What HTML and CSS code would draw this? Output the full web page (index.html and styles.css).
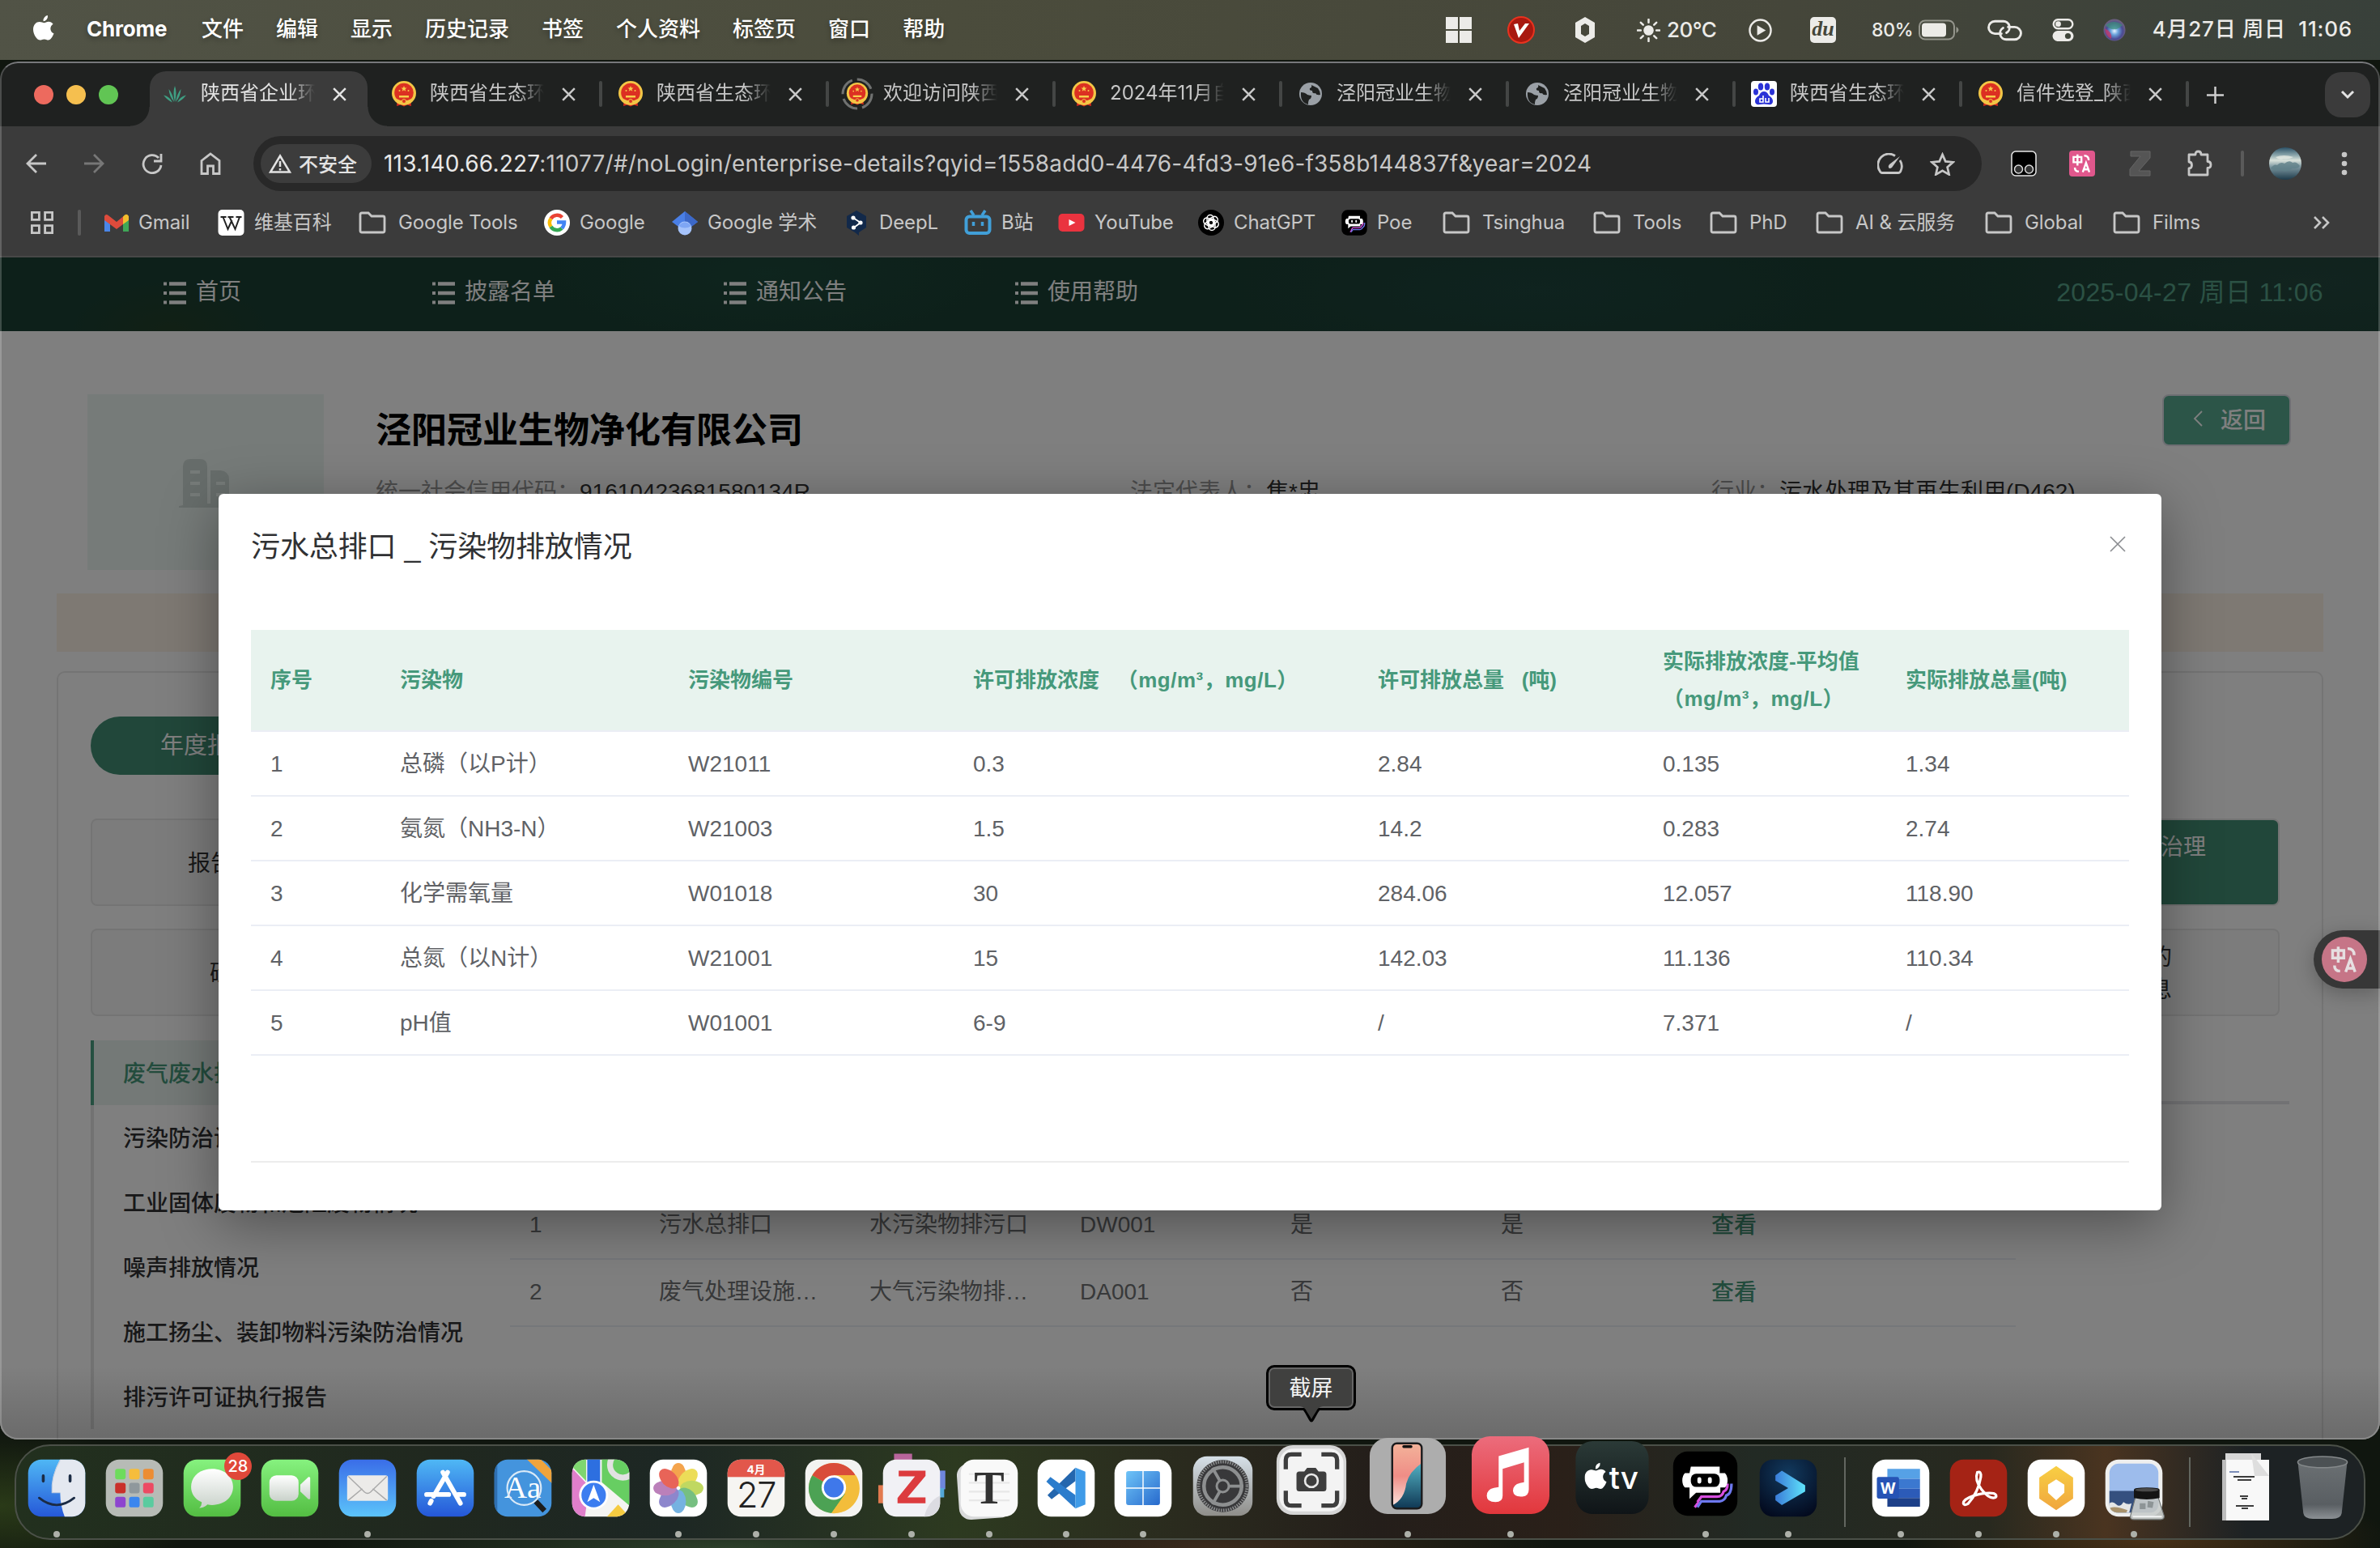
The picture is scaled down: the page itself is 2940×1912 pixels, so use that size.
FILE: index.html
```html
<!DOCTYPE html>
<html lang="zh-CN">
<head>
<meta charset="utf-8">
<title>陕西省企业环境信息</title>
<link rel="stylesheet" href="styles.css">
</head>
<body>
<svg class="sprite" aria-hidden="true">
  <defs>
    <linearGradient id="gBlue" x1="0" y1="0" x2="0" y2="1"><stop offset="0" stop-color="#4fb8f5"/><stop offset="1" stop-color="#2557d8"/></linearGradient>
    <linearGradient id="gGreen" x1="0" y1="0" x2="0" y2="1"><stop offset="0" stop-color="#86f27f"/><stop offset="1" stop-color="#53bd42"/></linearGradient>
    <linearGradient id="gMail" x1="0" y1="0" x2="0" y2="1"><stop offset="0" stop-color="#3a6de8"/><stop offset="1" stop-color="#5cc4fa"/></linearGradient>
    <linearGradient id="gRed" x1="0" y1="0" x2="0" y2="1"><stop offset="0" stop-color="#ec6c7c"/><stop offset="1" stop-color="#e2373c"/></linearGradient>
    <linearGradient id="gWhite" x1="0" y1="0" x2="0" y2="1"><stop offset="0" stop-color="#fff"/><stop offset="1" stop-color="#c9d2ca"/></linearGradient>
    <linearGradient id="gTv" x1="0" y1="0" x2="0" y2="1"><stop offset="0" stop-color="#2b3a37"/><stop offset="1" stop-color="#0f1417"/></linearGradient>
    <linearGradient id="gWin" x1="0" y1="0" x2="1" y2="1"><stop offset="0" stop-color="#6ec4f8"/><stop offset="1" stop-color="#2769cc"/></linearGradient>
    <linearGradient id="gTrash" x1="0" y1="0" x2="0" y2="1"><stop offset="0" stop-color="#6b7073"/><stop offset=".75" stop-color="#595e62"/><stop offset="1" stop-color="#8b9094"/></linearGradient>
    <linearGradient id="gSky" x1="0" y1="0" x2="0" y2="1"><stop offset="0" stop-color="#2a5066"/><stop offset=".25" stop-color="#8fa9ae"/><stop offset=".4" stop-color="#dbe3dc"/><stop offset=".6" stop-color="#7d97a0"/><stop offset="1" stop-color="#1d3a4a"/></linearGradient>
    <linearGradient id="gPhone" x1="0" y1="0" x2="0" y2="1"><stop offset="0" stop-color="#f3b39a"/><stop offset=".5" stop-color="#ef8d86"/><stop offset="1" stop-color="#fbe8e2"/></linearGradient>
    <linearGradient id="gPhone2" x1="0" y1="0" x2="0" y2="1"><stop offset="0" stop-color="#54b4c6"/><stop offset="1" stop-color="#0d3350"/></linearGradient>
    <linearGradient id="gGear" x1="0" y1="0" x2="0" y2="1"><stop offset="0" stop-color="#d6e0e8"/><stop offset="1" stop-color="#8f8e8a"/></linearGradient>
    <radialGradient id="gNavy" cx=".5" cy=".25" r=".8"><stop offset="0" stop-color="#123a5e"/><stop offset="1" stop-color="#030a1e"/></radialGradient>
    <linearGradient id="gCyan" x1="0" y1="0" x2="1" y2="0"><stop offset="0" stop-color="#3a7bd8"/><stop offset="1" stop-color="#5fe4fb"/></linearGradient>
    <linearGradient id="gYel" x1="0" y1="0" x2="0" y2="1"><stop offset="0" stop-color="#f8cf44"/><stop offset="1" stop-color="#f0a63e"/></linearGradient>
    <radialGradient id="gSiri" cx=".5" cy=".55" r=".5"><stop offset="0" stop-color="#e8f4ff"/><stop offset=".35" stop-color="#6aa3dc"/><stop offset=".75" stop-color="#4a4a94"/><stop offset="1" stop-color="#6b5f80"/></radialGradient>
    <clipPath id="sq"><rect x="1" y="1" width="98" height="98" rx="23"/></clipPath>
    <clipPath id="ph"><rect x="30" y="8" width="38" height="84" rx="6"/></clipPath>
  </defs>
  <symbol id="emblem" viewBox="0 0 32 32">
    <path d="M8 22h16l1 9-5-1.500-4 2-4-2-5 1.500z" fill="#d9281e"/>
    <circle cx="16" cy="15" r="15" fill="#f3c646"/>
    <circle cx="16" cy="14.500" r="11.800" fill="#dc3022"/>
    <path d="M16 6l1 2.500h2.500l-2 1.700.8 2.600-2.300-1.600-2.300 1.600.8-2.600-2-1.700H15zM10 18h12v2.500H10z" fill="#f7cf4b"/>
    <circle cx="10.500" cy="12" r="1" fill="#f7cf4b"/><circle cx="21.500" cy="12" r="1" fill="#f7cf4b"/>
    <path d="M7 22q9 5 18 0l-1 3.500q-8 4-16 0z" fill="#f3c646"/><circle cx="16" cy="25" r="2.500" fill="#dc3022" stroke="#f3c646"/>
  </symbol>
  <symbol id="globe" viewBox="0 0 32 32"><circle cx="16" cy="16" r="14" fill="#9aa0a6"/><path d="M4 14q5 0 8 3 3 1 5 1 0 4-3 5-1 2-1 6Q3 27 4 14zM17 5l8 4q3 4 3 8-5 1-6-2-4 1-4-3-4 0-3-3 3-1 2-4z" fill="#1f2120"/></symbol>
  <symbol id="x" viewBox="0 0 20 20"><path d="M3 3l14 14M17 3L3 17" stroke="currentColor" stroke-width="2.400" fill="none"/></symbol>
  <symbol id="folder" viewBox="0 0 34 28"><path d="M2 24V4q0-2 2-2h8l4 4h14q2 0 2 2v16q0 2-2 2H4q-2 0-2-2z" fill="none" stroke="#c7c7c7" stroke-width="2.800"/></symbol>
  <symbol id="list" viewBox="0 0 28 28"><path d="M7 2.500h21M7 14h21M7 25.500h21" stroke="#fff" stroke-width="4.500"/><path d="M0 2.500h4M0 14h4M0 25.500h4" stroke="#fff" stroke-width="4"/></symbol>
  <symbol id="trans" viewBox="0 0 32 32"><path d="M3 6h12v8H3zM9 2v17M19 4q7 0 7 7M5 22q0 6 6 6" fill="none" stroke="currentColor" stroke-width="3"/><path d="M17 29l5-14 5 14M19 25h6.500" fill="none" stroke="currentColor" stroke-width="3"/></symbol>
  <symbol id="poe" viewBox="0 0 100 100"><rect x="1" y="1" width="98" height="98" rx="22" fill="#000"/><path d="M38 78l6-8h24q8 0 10-8 6-2 6-12M34 86l6-8" fill="none" stroke="#d84fe0" stroke-width="4"/><path d="M38 86l6-9h28q8-1 10-9 8-2 8-18" fill="none" stroke="#6d78ee" stroke-width="4"/><path d="M28 24h44v10h8q4 4 4 11t-4 11h-7v8H36L26 73V56h-7q-4-4-4-11t4-11h7z" fill="#fff"/><rect x="28" y="35" width="44" height="20" rx="8" fill="#000"/><rect x="38" y="40" width="6" height="10" rx="3" fill="#fff"/><rect x="54" y="40" width="6" height="10" rx="3" fill="#fff"/></symbol>
  <symbol id="apple" viewBox="0 0 26 32"><path d="M18 0q.4 3-1.500 5.200T12.600 7.300q-.5-2.800 1.400-5T18 0zM13.500 9.200c1.500 0 3-1.500 5.600-1.500 2 0 4.200 1.100 5.500 3-4.800 2.900-4 9.700.9 11.600-1 3-3.800 8.300-6.900 8.300-1.900 0-2.700-1.200-5-1.200s-3.200 1.200-5 1.200C4.600 30.600 0 23.500 0 17.500 0 11.300 4 8 7.700 8c2.500 0 4.300 1.200 5.800 1.200z" fill="#fff"/></symbol>
</svg>

<header class="menubar">
  <nav class="menus">
    <svg class="apple"><use href="#apple"/></svg>
    <b>Chrome</b><span>文件</span><span>编辑</span><span>显示</span><span>历史记录</span><span>书签</span><span>个人资料</span><span>标签页</span><span>窗口</span><span>帮助</span>
  </nav>
  <div class="status">
    <svg viewBox="0 0 32 32" width="32" height="32"><path d="M0 0h15v15H0zM17 0h15v15H17zM0 17h15v15H0zM17 17h15v15H17z" fill="#ecebe8"/></svg>
    <svg viewBox="0 0 34 34" width="34" height="34"><circle cx="17" cy="17" r="16" fill="#a81810" stroke="#e8331f" stroke-width="2"/><path d="M8 10l5-1 2 9 7-9h5L14 27z" fill="#fff"/></svg>
    <svg viewBox="0 0 26 32" width="26" height="32"><path d="M13 0l12 7v18l-12 7L1 25V7zM13 8l-5 3v10l5 3 5-3V11z" fill="#ecebe8" fill-rule="evenodd"/></svg>
    <svg viewBox="0 0 30 30" width="29" height="29"><circle cx="15" cy="15" r="6.500" fill="#ecebe8"/><path d="M15 1v4M15 25v4M1 15h4M25 15h4M5 5l3 3M22 22l3 3M25 5l-3 3M5 25l3-3" stroke="#ecebe8" stroke-width="2.600" stroke-linecap="round"/></svg>
    <span class="temp">20°C</span>
    <svg viewBox="0 0 30 30" width="29" height="29"><circle cx="15" cy="15" r="13.500" fill="none" stroke="#ecebe8" stroke-width="2.500"/><path d="M11 8.500l11 6.500-11 6.500z" fill="#ecebe8"/></svg>
    <span class="du">du</span>
    <span class="pct">80%</span>
    <svg viewBox="0 0 50 26" width="50" height="26"><rect x="1" y="1.500" width="43" height="23" rx="7" fill="none" stroke="#94958c" stroke-width="2"/><rect x="4" y="4.500" width="30" height="17" rx="4" fill="#ecebe8"/><path d="M46.500 9q3 1.500 3 4t-3 4z" fill="#94958c"/></svg>
    <svg viewBox="0 0 42 26" width="43" height="27"><path d="M17 17H9a7.500 7.500 0 0 1 0-15h10a7.500 7.500 0 0 1 4 14M25 9h8a7.500 7.500 0 0 1 0 15H23a7.500 7.500 0 0 1-4-14" fill="none" stroke="#ecebe8" stroke-width="2.800" stroke-linecap="round"/></svg>
    <svg viewBox="0 0 26 28" width="27" height="28"><rect x="1.200" y="1.200" width="23.600" height="11" rx="5.500" fill="none" stroke="#ecebe8" stroke-width="2.400"/><circle cx="7" cy="6.700" r="3.400" fill="#ecebe8"/><rect x="0" y="15" width="26" height="13" rx="6.500" fill="#ecebe8"/><circle cx="19" cy="21.500" r="3.600" fill="#3f4539"/></svg>
    <svg viewBox="0 0 28 28" width="28" height="28"><circle cx="14" cy="14" r="13.500" fill="url(#gSiri)"/><path d="M3 8q10-8 21 0-6 6-10 5Q8 14 3 8z" fill="#3f8f77" opacity=".7"/><path d="M2 12q1 10 8 13 2-8-8-13z" fill="#c0386a" opacity=".8"/></svg>
    <span class="clock">4月27日 周日&nbsp; 11:06</span>
  </div>
</header>

<main class="window">
  <div class="tabstrip">
    <div class="lights"><i class="red"></i><i class="yellow"></i><i class="green"></i></div>
    <div class="tabs">
      <div class="tab active"><svg class="fav" viewBox="0 0 32 32"><path d="M16 26Q13 14 16 6q3 8 0 20zM15 26Q9 19 8.500 10q5 6 6.500 16zM17 26q6-7 6.500-16-5 6-6.500 16zM13 26.500Q7 24 2 17.500q8 2 11 9zM19 26.500q6-2.500 11-9-8 2-11 9z" fill="#3f9f83"/></svg><span>陕西省企业环</span><svg class="close"><use href="#x"/></svg></div>
      <div class="tab"><svg class="fav"><use href="#emblem"/></svg><span>陕西省生态环</span><svg class="close"><use href="#x"/></svg></div>
      <div class="tab"><svg class="fav"><use href="#emblem"/></svg><span>陕西省生态环</span><svg class="close"><use href="#x"/></svg></div>
      <div class="tab"><svg class="fav big" viewBox="0 0 40 40"><circle cx="20" cy="20" r="18" fill="none" stroke="#6f7170" stroke-width="3" stroke-dasharray="22 6"/><use href="#emblem" x="6" y="6" width="28" height="28"/></svg><span>欢迎访问陕西</span><svg class="close"><use href="#x"/></svg></div>
      <div class="tab"><svg class="fav"><use href="#emblem"/></svg><span>2024年11月自</span><svg class="close"><use href="#x"/></svg></div>
      <div class="tab"><svg class="fav"><use href="#globe"/></svg><span>泾阳冠业生物</span><svg class="close"><use href="#x"/></svg></div>
      <div class="tab"><svg class="fav"><use href="#globe"/></svg><span>泾阳冠业生物</span><svg class="close"><use href="#x"/></svg></div>
      <div class="tab"><svg class="fav" viewBox="0 0 32 32"><rect width="32" height="32" rx="4" fill="#fff"/><g fill="#2a32d6"><ellipse cx="12" cy="7" rx="3.200" ry="4.500"/><ellipse cx="20" cy="7" rx="3.200" ry="4.500"/><ellipse cx="6" cy="13.500" rx="3" ry="4"/><ellipse cx="26" cy="13.500" rx="3" ry="4"/><path d="M16 13q4 0 6 5 5 3 5 7 0 5-6 4-5-1-10 0-6 1-6-4 0-4 5-7 2-5 6-5z"/></g><path d="M11 22h4v4h-4zM15 18v8M18 21v5h4v-5" fill="none" stroke="#fff" stroke-width="1.600"/></svg><span>陕西省生态环</span><svg class="close"><use href="#x"/></svg></div>
      <div class="tab"><svg class="fav"><use href="#emblem"/></svg><span>信件选登_陕西</span><svg class="close"><use href="#x"/></svg></div>
    </div>
    <svg class="plus" viewBox="0 0 24 24"><path d="M12 1v22M1 12h22" stroke="#cfcfcf" stroke-width="2.600"/></svg>
    <div class="tabmenu"><svg viewBox="0 0 18 12" width="18" height="12"><path d="M2 2l7 7 7-7" fill="none" stroke="#e3e3e3" stroke-width="3"/></svg></div>
  </div>

  <div class="toolbar">
    <svg viewBox="0 0 26 26" width="26" height="26"><path d="M25 13H2M13 2L2 13l11 11" fill="none" stroke="#c7c7c7" stroke-width="2.800"/></svg>
    <svg viewBox="0 0 26 26" width="26" height="26"><path d="M1 13h23M13 2l11 11-11 11" fill="none" stroke="#777" stroke-width="2.800"/></svg>
    <svg viewBox="0 0 26 26" width="26" height="26"><path d="M21 6A11 11 0 1 0 24 15" fill="none" stroke="#c7c7c7" stroke-width="2.800"/><path d="M24 1v9h-9" fill="none" stroke="#c7c7c7" stroke-width="2.800"/></svg>
    <svg viewBox="0 0 26 28" width="26" height="28"><path d="M2 10.500L13 2l11 8.500V26.500h-7.500V17h-7v9.500H2z" fill="none" stroke="#c7c7c7" stroke-width="2.800"/></svg>
    <div class="omnibox">
      <div class="chip"><svg viewBox="0 0 28 24" width="28" height="24"><path d="M14 2.500L26 22.500H2z" fill="none" stroke="#e3e3e3" stroke-width="2.500"/><path d="M14 9v7M14 18v2.500" stroke="#e3e3e3" stroke-width="2.500"/></svg>不安全</div>
      <span class="url"><b>113.140.66.227</b>:11077/#/noLogin/enterprise-details?qyid=1558add0-4476-4fd3-91e6-f358b144837f&amp;year=2024</span>
      <svg viewBox="0 0 32 26" width="32" height="26"><path d="M22 3.500A13.500 13.500 0 0 0 3 22q1 2.500 3 2.500h20q2 0 3-2.500a13.500 13.500 0 0 0-1-13" fill="none" stroke="#c7c7c7" stroke-width="2.800"/><path d="M28 4L18 18q-3 2-4 0t1-4z" fill="#c7c7c7"/></svg>
      <svg viewBox="0 0 32 30" width="31" height="29"><path d="M16 3l3.900 8.800 9.600.9-7.200 6.400 2.100 9.400-8.400-4.900-8.400 4.900 2.100-9.400-7.200-6.400 9.600-.9z" fill="none" stroke="#c7c7c7" stroke-width="2.800"/></svg>
    </div>
    <div class="exts">
      <svg viewBox="0 0 32 32" width="32" height="32"><rect x="1" y="1" width="30" height="30" rx="5" fill="#000" stroke="#e8e8e8" stroke-width="1.500"/><circle cx="9.500" cy="23" r="5" fill="#333" stroke="#ddd" stroke-width="1.500"/><circle cx="22.500" cy="23" r="5" fill="#333" stroke="#ddd" stroke-width="1.500"/></svg>
      <svg class="pinkext" viewBox="0 0 32 32" width="32" height="32"><rect width="32" height="32" rx="4" fill="#e0578c"/><use href="#trans" x="3" y="3" width="26" height="26"/></svg>
      <svg viewBox="0 0 28 32" width="28" height="32"><path d="M2 1h24v8L12 25h14v6H1v-8L14 7H2z" fill="#555" stroke="#666"/></svg>
      <svg viewBox="0 0 34 34" width="34" height="34"><path d="M4 6h8q0-4 3.500-4T19 6h8v8.500q4 0 4 4t-4 4V31H4v-8q3.500 0 3.500-4T4 15z" fill="none" stroke="#c7c7c7" stroke-width="2.800" stroke-linejoin="round"/></svg>
      <i class="vsep"></i>
      <svg viewBox="0 0 40 40" width="40" height="40"><circle cx="20" cy="20" r="20" fill="url(#gSky)"/><path d="M2 26q4-6 8-4 4-5 9-2 6-5 10-1 5-2 9 4-3 4-9 3-8 6-15 2-7 2-12-2z" fill="#5f7f88" opacity=".8"/><path d="M8 12q10-4 22 0-6 3-12 2-6 2-10-2z" fill="#eef0e8" opacity=".7"/></svg>
      <svg viewBox="0 0 8 30" width="8" height="30"><g fill="#c7c7c7"><circle cx="4" cy="4" r="3.300"/><circle cx="4" cy="15" r="3.300"/><circle cx="4" cy="26" r="3.300"/></g></svg>
    </div>
  </div>

  <div class="bookmarks">
    <span class="bm"><svg viewBox="0 0 28 28" width="28" height="28"><path d="M1.400 1.400h9v9h-9zM17.600 1.400h9v9h-9zM1.400 17.600h9v9h-9zM17.600 17.600h9v9h-9z" fill="none" stroke="#c7c7c7" stroke-width="2.800"/></svg></span>
    <i class="vsep"></i>
    <span class="bm"><svg viewBox="0 0 30 22" width="30" height="22"><path d="M0 3v19h7V9z" fill="#4a86e8"/><path d="M30 3v19h-7V9z" fill="#3fa757"/><path d="M30 3v5l-7 5V3.500q4-5 7-.5z" fill="#f2bc2d"/><path d="M0 3v5l15 11 8-6V3.500L15 10 6 3Q2-1 0 3z" fill="#dd4b3c"/></svg>Gmail</span>
    <span class="bm"><svg viewBox="0 0 32 32" width="33" height="32"><rect width="32" height="32" rx="5" fill="#fff"/><path d="M3 9h7M12 9h7M22 9h7M6 9l6 15 5-11M14 9l7 15 5.500-15" fill="none" stroke="#222" stroke-width="2"/></svg>维基百科</span>
    <span class="bm f"><svg width="34" height="28"><use href="#folder"/></svg>Google Tools</span>
    <span class="bm"><svg viewBox="0 0 32 32" width="32" height="32"><circle cx="16" cy="16" r="16" fill="#fff"/><g fill="none" stroke-width="4.500"><path d="M22.500 9.500A9 9 0 0 0 8.500 11" stroke="#ea4335"/><path d="M8.500 11a9 9 0 0 0 0 10" stroke="#fbbc05"/><path d="M8.500 21a9 9 0 0 0 13.500 2" stroke="#34a853"/><path d="M22 23q3-3 3-7.500h-9" stroke="#4285f4"/></g></svg>Google</span>
    <span class="bm"><svg viewBox="0 0 32 32" width="32" height="32"><path d="M16 2L0 15l8 6h16l8-6z" fill="#4a7fe6"/><path d="M16 2l16 13-8 6-8-6z" fill="#3c68c8"/><circle cx="16" cy="23" r="8.500" fill="#a5c3fb"/><path d="M8 20q8-9 16 0-8 5-16 0z" fill="#7ea6f4"/></svg>Google 学术</span>
    <span class="bm deepl"><svg viewBox="0 0 26 32" width="26" height="32"><path d="M13 1l12 7v14l-9 6v4l-5-4L1 22V8z" fill="#12294a"/><path d="M9 10l9 6-8 6" fill="none" stroke="#fff" stroke-width="1.800"/><g fill="#fff"><circle cx="9" cy="10" r="2.600"/><circle cx="18" cy="16" r="2.600"/><circle cx="9.500" cy="22" r="2.600"/></g></svg>DeepL</span>
    <span class="bm"><svg viewBox="0 0 34 32" width="34" height="32"><rect x="2.500" y="8.500" width="29" height="20.500" rx="4" fill="none" stroke="#419fd8" stroke-width="4"/><path d="M8 1l4 6M26 1l-4 6M11.500 15v5M22.500 15v5" stroke="#419fd8" stroke-width="3.500"/></svg>B站</span>
    <span class="bm"><svg viewBox="0 0 32 22" width="33" height="22"><rect width="32" height="22" rx="5" fill="#ea333f"/><path d="M13 7l8 4-8 4z" fill="#fff"/></svg>YouTube</span>
    <span class="bm"><svg viewBox="0 0 32 32" width="32" height="32"><circle cx="16" cy="16" r="16" fill="#000"/><g fill="none" stroke="#fff" stroke-width="1.500"><rect x="11" y="6.500" width="8" height="13" rx="4"/><rect x="11" y="6.500" width="8" height="13" rx="4" transform="rotate(60 16 16)"/><rect x="11" y="6.500" width="8" height="13" rx="4" transform="rotate(120 16 16)"/><rect x="11" y="6.500" width="8" height="13" rx="4" transform="rotate(180 16 16)"/><rect x="11" y="6.500" width="8" height="13" rx="4" transform="rotate(240 16 16)"/><rect x="11" y="6.500" width="8" height="13" rx="4" transform="rotate(300 16 16)"/></g></svg>ChatGPT</span>
    <span class="bm"><svg width="32" height="32"><use href="#poe"/></svg>Poe</span>
    <span class="bm f"><svg width="34" height="28"><use href="#folder"/></svg>Tsinghua</span>
    <span class="bm f"><svg width="34" height="28"><use href="#folder"/></svg>Tools</span>
    <span class="bm f"><svg width="34" height="28"><use href="#folder"/></svg>PhD</span>
    <span class="bm f"><svg width="34" height="28"><use href="#folder"/></svg>AI &amp; 云服务</span>
    <span class="bm f"><svg width="34" height="28"><use href="#folder"/></svg>Global</span>
    <span class="bm f"><svg width="34" height="28"><use href="#folder"/></svg>Films</span>
    <span class="bm"><svg viewBox="0 0 22 18" width="22" height="18"><path d="M2 2l7 7-7 7M12 2l7 7-7 7" fill="none" stroke="#c7c7c7" stroke-width="2.600"/></svg></span>
  </div>

  <section class="page">
    <nav class="sitenav">
      <a><svg><use href="#list"/></svg>首页</a>
      <a><svg><use href="#list"/></svg>披露名单</a>
      <a><svg><use href="#list"/></svg>通知公告</a>
      <a><svg><use href="#list"/></svg>使用帮助</a>
      <time>2025-04-27 周日 11:06</time>
    </nav>

    <div class="company">
      <div class="photo"><svg viewBox="0 0 64 60" width="64" height="60"><path d="M5 57V9q0-9 9-9h12q9 0 9 9v46h4V14h12q11 1 11 11v32h2v3H0v-2zM14 14v4h12v-4zM14 28v4h12v-4zM14 42v4h12v-4zM46 28v4h11v-4zM46 42v4h11v-4z" fill="#cfdbd6" fill-rule="evenodd"/></svg></div>
      <div class="facts">
        <h1>泾阳冠业生物净化有限公司</h1>
        <div class="row"><p><label>统一社会信用代码：</label>91610423681580134R</p><p><label>法定代表人：</label>焦*忠</p><p><label>行业：</label>污水处理及其再生利用(D462)</p></div>
      </div>
      <button class="back"><svg viewBox="0 0 12 20" width="12" height="20"><path d="M11 1L2 10l9 9" fill="none" stroke="#fff" stroke-width="1.800"/></svg>返回</button>
    </div>

    <div class="notice"></div>

    <div class="card">
      <div class="pill">年度报</div>
      <div class="tiles">
        <div class="tile t1">报告</div><div class="tile t2 on">治理</div>
        <div class="tile t3">碳</div><div class="tile t4">的<br>息</div>
      </div>
      <div class="detail">
        <ul class="side">
          <li class="on">废气废水排</li><li>污染防治设</li><li>工业固体废物和危险废物情况</li><li>噪声排放情况</li><li>施工扬尘、装卸物料污染防治情况</li><li>排污许可证执行报告</li>
        </ul>
        <div class="outlets">
          <div class="rule"></div>
          <div class="orow"><span>1</span><span>污水总排口</span><span>水污染物排污口</span><span>DW001</span><span>是</span><span>是</span><a>查看</a></div>
          <div class="orow"><span>2</span><span>废气处理设施…</span><span>大气污染物排…</span><span>DA001</span><span>否</span><span>否</span><a>查看</a></div>
        </div>
      </div>
    </div>

    <div class="mask">
      <div class="dialog">
        <header><h2>污水总排口 _ 污染物排放情况</h2><svg class="dx" viewBox="0 0 20 20"><path d="M1 1l18 18M19 1L1 19" stroke="#8b8d91" stroke-width="1.700"/></svg></header>
        <table>
          <colgroup><col class="c1"><col class="c2"><col class="c3"><col class="c4"><col class="c5"><col class="c6"><col class="c7"></colgroup>
          <thead><tr><th>序号</th><th>污染物</th><th>污染物编号</th><th>许可排放浓度&nbsp;&nbsp;&nbsp;<span class="unit">（mg/m³，mg/L）</span></th><th>许可排放总量&nbsp;&nbsp;&nbsp;(吨)</th><th>实际排放浓度-平均值<br><span class="unit">（mg/m³，mg/L）</span></th><th>实际排放总量(吨)</th></tr></thead>
          <tbody>
            <tr><td>1</td><td>总磷（以P计）</td><td>W21011</td><td>0.3</td><td>2.84</td><td>0.135</td><td>1.34</td></tr>
            <tr><td>2</td><td>氨氮（NH3-N）</td><td>W21003</td><td>1.5</td><td>14.2</td><td>0.283</td><td>2.74</td></tr>
            <tr><td>3</td><td>化学需氧量</td><td>W01018</td><td>30</td><td>284.06</td><td>12.057</td><td>118.90</td></tr>
            <tr><td>4</td><td>总氮（以N计）</td><td>W21001</td><td>15</td><td>142.03</td><td>11.136</td><td>110.34</td></tr>
            <tr><td>5</td><td>pH值</td><td>W01001</td><td>6-9</td><td>/</td><td>7.371</td><td>/</td></tr>
          </tbody>
        </table>
        <div class="endline"></div>
      </div>
    </div>
    <div class="translate"><svg viewBox="0 0 56 56" width="56" height="56"><circle cx="28" cy="28" r="28" fill="#c67587"/><use href="#trans" x="10" y="10" width="37" height="37"/></svg></div>
    <div class="shade"></div>
    <div class="tip">截屏<svg viewBox="0 0 34 20" width="34" height="20"><path d="M0 0q6 0 9 6l5 9q3 5 6 0l5-9q3-6 9-6z" fill="#000"/><path d="M3-2q6 1 8 6l5 8q1 3 2 0l5-8q2-5 8-6z" fill="#40403f"/></svg></div>
  </section>
</main>

<footer class="dock">
  <div class="app run"><svg viewBox="0 0 100 100"><g clip-path="url(#sq)"><rect width="100" height="100" fill="url(#gBlue)"/><path d="M56 0Q40 30 42 58h14q0 22 8 42h40V0z" fill="#e4e8f0"/></g><path d="M27 29v9M73 29v9" stroke="#1b2b44" stroke-width="5" stroke-linecap="round"/><path d="M56 2Q40 30 42 58h14" fill="none" stroke="#c3cede" stroke-width="1.500"/><path d="M20 67q30 24 60 0" fill="none" stroke="#1b2b44" stroke-width="4" stroke-linecap="round"/></svg></div>
  <div class="app"><svg viewBox="0 0 100 100"><rect x="1" y="1" width="98" height="98" rx="23" fill="#b7bbb6"/><g><rect x="17" y="17" width="18" height="18" rx="4" fill="#6edc5c"/><rect x="41" y="17" width="18" height="18" rx="4" fill="#f5bd3c"/><rect x="65" y="17" width="18" height="18" rx="4" fill="#ec8d33"/><rect x="17" y="41" width="18" height="18" rx="4" fill="#c9302a"/><rect x="41" y="41" width="18" height="18" rx="4" fill="#8f989c"/><rect x="65" y="41" width="18" height="18" rx="4" fill="#ec4a63"/><rect x="17" y="65" width="18" height="18" rx="4" fill="#8d45cf"/><rect x="41" y="65" width="18" height="18" rx="4" fill="#3a86ee"/><rect x="65" y="65" width="18" height="18" rx="4" fill="#5acb9f"/></g></svg></div>
  <div class="app"><svg viewBox="0 0 100 100"><rect x="1" y="1" width="98" height="98" rx="23" fill="url(#gGreen)"/><path d="M50 17c22 0 36 14 36 31S72 79 50 79q-4 0-8-1-6 6-14 6 5-5 4-10C20 69 14 59 14 48c0-17 14-31 36-31z" fill="url(#gWhite)"/></svg><em>28</em></div>
  <div class="app"><svg viewBox="0 0 100 100"><rect x="1" y="1" width="98" height="98" rx="23" fill="url(#gGreen)"/><rect x="15" y="28" width="50" height="44" rx="12" fill="url(#gWhite)"/><path d="M68 44l14-13q3-1 3 2v34q0 3-3 2L68 56z" fill="url(#gWhite)"/></svg></div>
  <div class="app run"><svg viewBox="0 0 100 100"><rect x="1" y="1" width="98" height="98" rx="23" fill="url(#gMail)"/><rect x="15" y="28" width="70" height="44" rx="4" fill="#ecebe9"/><path d="M17 30l28 27q5 4 10 0l28-27M17 71l24-20M83 71L59 51" fill="none" stroke="#a9a9a9" stroke-width="2"/></svg></div>
  <div class="app"><svg viewBox="0 0 100 100"><rect x="1" y="1" width="98" height="98" rx="23" fill="url(#gBlue)"/><g stroke="#fff" stroke-width="8" stroke-linecap="round"><path d="M54 23L30 64M46 23l30 53M18 61h38M72 61h10M26 72l-2 4"/></g></svg></div>
  <div class="app"><svg viewBox="0 0 100 100"><g clip-path="url(#sq)"><rect width="100" height="100" fill="#4494dd"/><path d="M0 10h6v90H0z" fill="#2f6fb0"/><path d="M56 0h24l24 24v22z" fill="#f0a43c"/></g><text x="18" y="67" font-family="Liberation Serif,serif" font-size="54" fill="#fff">Aa</text><circle cx="52" cy="50" r="29" fill="none" stroke="#d9e9f7" stroke-width="3"/><path d="M72 73l15 16" stroke="#1c1c1c" stroke-width="9"/></svg></div>
  <div class="app"><svg viewBox="0 0 100 100"><g clip-path="url(#sq)"><rect width="100" height="100" fill="#f4f4f2"/><path d="M0 15l30 32-8 60H0z" fill="#e07fcb"/><path d="M0 0h25v38L0 12z" fill="#7ed66f"/><path d="M52 0h52v84L52 40z" fill="#67ce62"/><path d="M60 100l20-22 20 22z" fill="#f5cb41"/><path d="M27 0h22v60H27z" fill="#2d6fe0"/><circle cx="88" cy="10" r="22" fill="none" stroke="#e2e2e2" stroke-width="10"/></g><circle cx="38" cy="62" r="25" fill="#fff"/><circle cx="38" cy="62" r="21" fill="#3c7df0"/><path d="M38 44l11 30-11-7-11 7z" fill="#fff"/></svg></div>
  <div class="app run"><svg viewBox="0 0 100 100"><rect x="1" y="1" width="98" height="98" rx="23" fill="#fff"/><g opacity=".85"><ellipse cx="50" cy="27" rx="13" ry="20" fill="#f3952e"/><ellipse cx="50" cy="27" rx="13" ry="20" fill="#e9d83c" transform="rotate(45 50 50)"/><ellipse cx="50" cy="27" rx="13" ry="20" fill="#b6d246" transform="rotate(90 50 50)"/><ellipse cx="50" cy="27" rx="13" ry="20" fill="#5fb56c" transform="rotate(135 50 50)"/><ellipse cx="50" cy="27" rx="13" ry="20" fill="#5ea5dc" transform="rotate(180 50 50)"/><ellipse cx="50" cy="27" rx="13" ry="20" fill="#7a72c4" transform="rotate(225 50 50)"/><ellipse cx="50" cy="27" rx="13" ry="20" fill="#b06aae" transform="rotate(270 50 50)"/><ellipse cx="50" cy="27" rx="13" ry="20" fill="#e5493c" transform="rotate(315 50 50)"/></g></svg></div>
  <div class="app run"><svg viewBox="0 0 100 100"><g clip-path="url(#sq)"><rect width="100" height="100" fill="#f6f5f2"/><rect width="100" height="31" fill="#e2574b"/></g><text x="50" y="25" text-anchor="middle" font-family="Inter,Noto Sans CJK SC,sans-serif" font-weight="700" font-size="19" fill="#fff">4月</text><text x="50" y="84" text-anchor="middle" font-family="Inter,sans-serif" font-weight="300" font-size="60" letter-spacing="-2" fill="#222">27</text></svg></div>
  <div class="app run"><svg viewBox="0 0 100 100"><rect x="1" y="1" width="98" height="98" rx="23" fill="#f3f3f1"/><circle cx="50" cy="50" r="43" fill="#f3bd3b"/><path d="M50 50L13 28A43 43 0 0 1 87 28H50z" fill="#d94c3a"/><path d="M50 50L13 28A43 43 0 0 0 46 93l24-33z" fill="#4ca254"/><path d="M50 28h38a43 43 0 0 1-42 65l23-33z" fill="#f3bd3b"/><circle cx="50" cy="49" r="21" fill="#fff"/><circle cx="50" cy="49" r="17" fill="#3f78ea"/></svg></div>
  <div class="app run"><svg class="over" viewBox="0 0 100 100"><rect x="20" y="-9" width="31" height="30" fill="#b8659b"/><rect x="88" y="20" width="20" height="32" fill="#6e86dc"/><rect x="-7" y="45" width="20" height="31" fill="#e27a4f"/><rect x="80" y="50" width="26" height="16" fill="#54a8d8"/><rect x="1" y="1" width="98" height="98" rx="23" fill="#f1f1f5"/><path d="M28 20h46v9L43 66h31v10H26v-9l30-37H28z" fill="#dc3b3e"/><path d="M72 99q6-26 27-36v14q-2 20-27 22z" fill="#dcdce2"/></svg></div>
  <div class="app run"><svg class="over" viewBox="0 0 100 100"><rect x="-4" y="6" width="90" height="96" rx="20" fill="#d9dadb" transform="rotate(-4 50 50)"/><rect x="1" y="1" width="98" height="98" rx="23" fill="#f9f9f9"/><path d="M15 26h70M15 41h70M15 56h70M15 71h70" stroke="#e8e8e8" stroke-width="3"/><text x="50" y="76" text-anchor="middle" font-family="Liberation Serif,serif" font-size="78" font-weight="700" fill="#333">T</text></svg></div>
  <div class="app run"><svg viewBox="0 0 100 100"><rect x="1" y="1" width="98" height="98" rx="23" fill="#fff"/><path d="M66 15l-48 47 7 7 41-31z" fill="#2466ae"/><path d="M66 85L16 39l7-8 43 31z" fill="#2b7ccc"/><path d="M66 15l17 7v56l-17 7z" fill="#3f9be8"/></svg></div>
  <div class="app run"><svg viewBox="0 0 100 100"><rect x="1" y="1" width="98" height="98" rx="23" fill="#fff"/><path d="M21 25q0-4 4-4h24v28H21zM51 21h24q4 0 4 4v24H51zM21 51h28v28H25q-4 0-4-4zM51 51h28v24q0 4-4 4H51z" fill="url(#gWin)"/></svg></div>
  <div class="app"><svg class="w74" viewBox="0 0 100 100"><rect x="1" y="1" width="98" height="98" rx="23" fill="url(#gGear)"/><circle cx="50" cy="50" r="43" fill="#38383a"/><circle cx="50" cy="50" r="40" fill="none" stroke="#8d8f90" stroke-width="5" stroke-dasharray="2 2"/><circle cx="50" cy="50" r="31" fill="none" stroke="#8d8f90" stroke-width="6"/><circle cx="50" cy="50" r="10" fill="none" stroke="#8d8f90" stroke-width="4"/><path d="M60 50h24M45 41L33 20M45 59L33 80" stroke="#8d8f90" stroke-width="5"/></svg></div>
  <div class="app"><svg class="w88" viewBox="0 0 100 100"><rect x="1" y="1" width="98" height="98" rx="23" fill="#d5d5d5"/><rect x="5" y="6" width="90" height="88" rx="20" fill="#f3f3f3"/><path d="M14 35V22q0-8 8-8h14M64 14h14q8 0 8 8v13M14 65v13q0 8 8 8h14M64 86h14q8 0 8-8V65" fill="none" stroke="#3e3e3e" stroke-width="6"/><path d="M29 42q0-4 4-4h7l4-5h12l4 5h7q4 0 4 4v20q0 4-4 4H33q-4 0-4-4z" fill="#3e3e3e"/><circle cx="50" cy="51" r="9" fill="none" stroke="#e8e8e8" stroke-width="3"/></svg></div>
  <div class="app run"><svg class="w96" viewBox="0 0 100 100"><rect x="1" y="1" width="98" height="98" rx="23" fill="#adadad"/><g clip-path="url(#ph)"><rect x="30" y="8" width="40" height="84" fill="url(#gPhone)"/><path d="M70 32Q52 44 48 60q-2 20-18 28v6h40z" fill="url(#gPhone2)"/></g><rect x="30" y="8" width="38" height="84" rx="6" fill="none" stroke="#1b1b1d" stroke-width="2.500"/><rect x="43" y="10.500" width="13" height="3.500" rx="1.700" fill="#111"/></svg></div>
  <div class="app run"><svg class="w98" viewBox="0 0 100 100"><rect x="1" y="1" width="98" height="98" rx="23" fill="url(#gRed)"/><path d="M35 26l38-11v53q0 8-8 9-11 1-12-7 0-8 9-10l5-1V34l-27 8v34q0 8-9 8-11 0-11-8t9-10l6-1z" fill="#fff"/></svg></div>
  <div class="app"><svg class="w92" viewBox="0 0 100 100"><rect x="1" y="1" width="98" height="98" rx="23" fill="url(#gTv)"/><use href="#apple" x="13" y="30" width="30" height="37"/><text x="46" y="65" font-family="Inter,sans-serif" font-weight="500" font-size="42" fill="#fff">tv</text></svg></div>
  <div class="app run"><svg class="w80"><use href="#poe"/></svg></div>
  <div class="app run"><svg viewBox="0 0 100 100"><rect x="1" y="1" width="98" height="98" rx="23" fill="url(#gNavy)"/><path d="M28 28l11-8 40 25v11L39 79l-11-8 0-8 22-13-22-13z" fill="url(#gCyan)"/></svg></div>
  <i class="dsep"></i>
  <div class="app run"><svg viewBox="0 0 100 100"><rect x="1" y="1" width="98" height="98" rx="23" fill="#fff"/><path d="M27 17h56v17H27z" fill="#56a1e6"/><path d="M27 34h56v17H27z" fill="#3b78d0"/><path d="M27 51h56v16H27z" fill="#2c5bb8"/><path d="M27 67h56v15H27z" fill="#1d4089"/><rect x="9" y="31" width="38" height="37" rx="3" fill="#2653b5"/><text x="28" y="60" text-anchor="middle" font-family="Inter,sans-serif" font-weight="700" font-size="26" fill="#fff">W</text></svg></div>
  <div class="app run"><svg viewBox="0 0 100 100"><rect x="1" y="1" width="98" height="98" rx="23" fill="#a52315"/><path d="M48 23q7-3 6 8-4 26-22 46-7 4-8-1 0-7 18-13 20-6 34-4 7 3 3 7-10 4-24-14-12-16-7-29z" fill="none" stroke="#fff" stroke-width="4.500"/></svg></div>
  <div class="app run"><svg viewBox="0 0 100 100"><rect x="1" y="1" width="98" height="98" rx="23" fill="#fff"/><path d="M50 12l29 20v36L50 88 21 68V32zM50 35l-14 9v14l14 13 14-13V44z" fill="url(#gYel)" fill-rule="evenodd"/></svg></div>
  <div class="app run"><svg class="over" viewBox="0 0 100 100"><rect x="1" y="1" width="98" height="98" rx="23" fill="#efefee"/><rect x="8" y="8" width="84" height="84" rx="16" fill="#9dbcec"/><path d="M8 55h84v22q0 15-16 15H24Q8 92 8 77z" fill="#35507f"/><path d="M8 76q6-4 12 2t12-4q8 6 14 2l-4 16H24Q8 92 8 80z" fill="#e4e6e6"/><path d="M9 84q10-4 30 4l-2 4H24q-12 0-15-8z" fill="#a8926c"/><path d="M53 64h38l11 34q0 6-6 6H50q-7 0-6-6z" fill="#c9cdcc" fill-opacity=".92" stroke="#6d7272" stroke-width="1.500"/><path d="M60 76h10v10H60zM74 72l10 2-2 10-9-1z" fill="#8d9496"/><path d="M48 99h50" stroke="#f3f5f5" stroke-width="3"/><path d="M50 53q0-4 22-4t22 4v14q-22 5-44 0z" fill="#141414"/><ellipse cx="72" cy="53" rx="20" ry="3" fill="#4a4a4a"/></svg></div>
  <i class="dsep"></i>
  <div class="app"><svg class="doc" viewBox="0 0 58 84"><path d="M4 1h44v20H4z" fill="#d7d7d7"/><path d="M0 9h56v75H0z" fill="#bdbdbd"/><path d="M5 9h53v75H5z" fill="#f8f8f8"/><path d="M36 1l22 28H40z" fill="#dedede"/><path d="M9 24h12" stroke="#7b8db8" stroke-width="2"/><path d="M14 30h26M19 34h17M22 54h10M24 57h7M17 66h22M24 69h8" stroke="#3c3c3c" stroke-width="2"/></svg></div>
  <div class="app"><svg class="trash" viewBox="0 0 64 80"><path d="M1 7l7 65q1 7 12 7h24q11 0 12-7l7-65z" fill="url(#gTrash)"/><ellipse cx="32" cy="8" rx="31" ry="7" fill="#4c5154" stroke="#85898b" stroke-width="1.500"/></svg></div>
</footer>
</body>
</html>
```

FILE: styles.css
```css
* { box-sizing: border-box; }
html, body { margin: 0; padding: 0; }
body {
  width: 2940px; height: 1912px; overflow: hidden;
  font-family: "Liberation Sans", "Noto Sans CJK SC", sans-serif;
  background:
    radial-gradient(ellipse 420px 60px at 1500px 1910px, #3a2a1c, transparent),
    radial-gradient(ellipse 300px 70px at 2650px 1900px, #4a3218, transparent),
    radial-gradient(ellipse 260px 90px at 0 1860px, #2a3a18, transparent),
    radial-gradient(ellipse 500px 50px at 900px 1912px, #2c3f2a, transparent),
    #10160f;
}
.sprite { position: absolute; width: 0; height: 0; }
svg { flex: none; display: block; }

/* system menu bar */
.menubar {
  height: 74px; display: flex; justify-content: space-between; align-items: center;
  padding: 0 34px 0 41px; color: #fff;
  background: linear-gradient(100deg, #515346 0, #4b4c3c 40%, #45463a 75%, #38403a 100%);
  font: 500 26px/36px "Inter", "Noto Sans CJK SC", sans-serif;
}
.menus { display: flex; align-items: center; gap: 40px; padding-bottom: 2px; text-shadow: 0 3px 6px rgba(0,0,0,.3); white-space: nowrap; }
.menus .apple { width: 26px; height: 32px; margin-bottom: 2px; }
.menus b { font-weight: 700; width: 102px; letter-spacing: -.2px; }
.status {
  display: grid; align-items: center; color: #ecebe8; white-space: nowrap;
  grid-template-columns: 76px 83px 77px 37px 101px 76px 76px 58px 85px 80px 63px 61px 247px;
}
.status .pct { font-size: 23px; letter-spacing: -.3px; }
.status .du { width: 32px; height: 32px; border-radius: 5px; background: #ecebe8; color: #45463a; font: italic 700 26px/29px "Liberation Serif", serif; text-align: center; }
.temp { letter-spacing: -.5px; }
.status .clock { justify-self: end; letter-spacing: .8px; padding-bottom: 3px; }

/* browser window */
.window { position: relative; margin-top: 2px; height: 1702px; border-radius: 22px; overflow: hidden; background: #3b3b3b; }
.window::after { content: ""; position: absolute; inset: 0; border-radius: 22px; border: 2px solid rgba(255,255,255,.2); border-top-color: #77787b; pointer-events: none; }
.tabstrip { height: 80px; background: #1f2120; display: flex; align-items: center; padding: 2px 12px 0 42px; }
.lights { display: flex; gap: 16px; width: 140px; }
.lights i { width: 24px; height: 24px; border-radius: 50%; }
.red { background: #ed6a5e; } .yellow { background: #f5bf4f; } .green { background: #61c554; }
.tabs { display: flex; height: 78px; }
.tab { position: relative; width: 280px; height: 78px; display: flex; align-items: center; padding: 0 0 2px 21px; color: #c7c7c7; font: 24px/36px "Inter", "Noto Sans CJK SC", sans-serif; }
.tab .fav { width: 32px; height: 32px; margin-right: 16px; }
.tab .fav.big { width: 40px; height: 40px; margin: 0 12px 0 -4px; }
.tab span { width: 150px; margin: 0 11px 2px 0; white-space: nowrap; -webkit-mask-image: linear-gradient(90deg, #000 72%, transparent 94%); mask-image: linear-gradient(90deg, #000 72%, transparent 94%); }
.tab .close { width: 21px; height: 21px; }
.tab:not(.active)::after { content: ""; position: absolute; right: -2px; top: 22px; width: 4px; height: 32px; border-radius: 2px; background: #444645; }
.tab.active { color: #e3e3e3; z-index: 1; padding-left: 18px; }
.tab.active::before { content: ""; position: absolute; z-index: -1; left: 3px; top: 10px; width: 269px; height: 68px; border-radius: 20px 20px 0 0; background: #3b3b3b; }
.tab.active::after { content: ""; position: absolute; z-index: -1; left: -21px; bottom: 0; width: 317px; height: 24px; background: radial-gradient(circle at 0 0, transparent 23px, #3b3b3b 24px) left / 24px 24px no-repeat, radial-gradient(circle at 100% 0, transparent 23px, #3b3b3b 24px) right / 24px 24px no-repeat; }
.plus { width: 23px; height: 23px; margin-left: 23px; }
.tabmenu { margin-left: auto; width: 56px; height: 56px; border-radius: 20px; background: #3b3b3b; display: grid; place-items: center; }

.toolbar { height: 92px; display: grid; align-items: center; grid-template-columns: 71px 72px 72px 66px 2135px 1fr; padding: 0 12px 0 32px; }
.omnibox { height: 68px; border-radius: 34px; background: #282828; display: flex; align-items: center; padding: 0 33px 0 9px; gap: 33px; }
.chip { width: 137px; height: 48px; border-radius: 24px; background: #3c3c3c; color: #e3e3e3; display: flex; align-items: center; gap: 9px; padding-left: 10px; font: 500 24px/44px "Noto Sans CJK SC", sans-serif; }
.url { margin-left: -18px; flex: 1; color: #c7c7c7; font: 28px "Inter", sans-serif; white-space: nowrap; letter-spacing: .18px; }
.url b { font-weight: 400; color: #e8e8e8; }
.exts { display: grid; align-items: center; padding-left: 36px; grid-template-columns: 72px 74px 70px 68px 35px 89px 8px; }
.pinkext { color: #fff; }
.vsep { width: 4px; height: 32px; border-radius: 2px; background: #5a5a5a; }

.bookmarks {
  height: 70px; padding: 0 0 14px 38px; border-bottom: 2px solid #474747;
  display: grid; align-items: center; color: #c7c7c7; font: 24px/32px "Inter", "Noto Sans CJK SC", sans-serif; white-space: nowrap;
  grid-template-columns: 58px 33px 140px 174px 229px 158px 215px 146px 116px 173px 177px 125px 186px 144px 131px 209px 158px 247px 30px;
}
.bm { display: flex; align-items: center; gap: 12px; height: 32px; letter-spacing: -.1px; }
.bm.f { gap: 15px; }
.bm.deepl { gap: 15px; }

/* site */
.page { position: relative; height: 1460px; overflow: hidden; background: #fff; color: #333; font-size: 28px; }
.sitenav {
  height: 91px; display: grid; align-items: center; color: #fff; padding: 0 70px 6px 202px; line-height: 36px;
  grid-template-columns: 332px 360px 360px 200px 1fr;
  background:
    radial-gradient(ellipse 120px 60px at 210px 90px, #23402a, transparent),
    radial-gradient(ellipse 300px 90px at 950px 20px, #1d4a3c, transparent),
    radial-gradient(ellipse 400px 100px at 1900px 40px, #1e463e, transparent),
    radial-gradient(ellipse 500px 120px at 2850px 30px, #24483f, transparent),
    #1b4034;
}
.sitenav a { display: flex; align-items: center; gap: 12px; }
.sitenav svg { width: 28px; height: 28px; margin-top: 2px; }
.sitenav time { justify-self: end; font-size: 32px; color: #56a289; white-space: nowrap; letter-spacing: .35px; }
.company { height: 324px; padding: 78px 110px 0 108px; display: flex; align-items: flex-start; }
.photo { width: 292px; height: 217px; background: #edf6f3; display: grid; place-items: center; padding-top: 3px; padding-right: 3px; }
.facts { padding-left: 64px; width: 2270px; flex: none; margin-right: -6px; }
.facts h1 { margin: 8px 0 0; font: 700 44px/66px "Noto Sans CJK SC", sans-serif; color: #000; }
.row { display: grid; grid-template-columns: 932px 718px 1fr; margin-top: 26px; }
.row p { margin: 0; line-height: 42px; white-space: nowrap; }
.row label { color: #999; }
.back { width: 159px; height: 64px; border: 2px solid #dcdfe6; border-radius: 8px; background: #58ab91; color: #fff; font: 500 28px "Noto Sans CJK SC", sans-serif; display: flex; align-items: center; gap: 22px; padding: 0 0 4px 36px; margin-left: auto; white-space: nowrap; }
.notice { height: 72px; margin: 0 70px; background: #fcf2e7; }
.card { margin: 24px 70px 0; height: 1000px; border: 2px solid #e8e8e8; border-radius: 10px; padding: 54px 40px 0; }
.pill { width: 400px; height: 72px; border-radius: 36px; background: #438f75; color: #fff; font-size: 29px; line-height: 72px; padding-left: 86px; }
.tiles { display: grid; grid-template-columns: 432px 432px; justify-content: space-between; row-gap: 28px; margin-top: 54px; width: 2704px; }
.tile { height: 108px; border: 2px solid #e8e8e8; border-radius: 8px; background: #f9f9f9; line-height: 108px; }
.t1 { padding-left: 118px; }
.t2 { text-align: right; padding-right: 89px; line-height: 68px; }
.t3 { padding-left: 145px; }
.t4 { text-align: right; padding: 14px 131px 0 0; line-height: 40px; }
.tile.on { background: #438f75; color: #fff; }
.detail { display: flex; margin-top: 30px; justify-content: space-between; width: 2716px; }
.side { list-style: none; margin: 0; padding: 0; width: 480px; color: #303133; font-family: "Noto Sans CJK SC", sans-serif; font-weight: 500; }
.side li { height: 80px; line-height: 78px; padding-left: 36px; border-left: 4px solid #e4e4e4; white-space: nowrap; }
.side li.on { color: #46997b; background: #e8f3ee; border-color: #4aa083; }
.outlets { width: 2198px; padding-top: 75px; color: #606266; }
.rule { height: 4px; background: #e4e4e8; margin-bottom: 109px; }
.orow { width: 1860px; height: 83px; border-bottom: 2px solid #ebeef5; padding: 0 0 2px 24px; display: grid; grid-template-columns: 160px 260px 260px 260px 260px 260px 1fr; align-items: center; color: #707274; white-space: nowrap; line-height: 32px; }
.orow a { color: #46997b; font-weight: 500; padding-top: 2px; }

.mask { position: absolute; inset: 0; background: rgba(0,0,0,.5); }
.dialog { margin: 292px 0 0 270px; width: 2400px; height: 885px; border-radius: 6px; background: #fff; box-shadow: 0 16px 70px rgba(0,0,0,.38); padding: 0 40px; }
.dialog header { height: 168px; display: flex; justify-content: space-between; align-items: flex-start; }
.dialog h2 { margin: 41px 0 0; font: 400 36px/50px "Liberation Sans", "Noto Sans CJK SC", sans-serif; color: #303133; letter-spacing: -.1px; }
.dx { width: 20px; height: 20px; margin: 52px 4px 0 0; }
table { width: 2320px; table-layout: fixed; border-collapse: separate; border-spacing: 0; }
.c1 { width: 160px; } .c2 { width: 356px; } .c3 { width: 352px; } .c4 { width: 500px; } .c5 { width: 352px; } .c6 { width: 300px; } .c7 { width: 300px; }
th, td { text-align: left; padding: 0 0 0 24px; border-bottom: 2px solid #ebeef5; white-space: nowrap; }
th { height: 126px; background: #e8f3ee; color: #46997b; font-size: 26px; line-height: 46px; }
.unit { letter-spacing: .5px; }
td { height: 80px; color: #606266; font-size: 28px; line-height: 32px; padding-top: 1px; }
.endline { height: 2px; background: #ececec; margin-top: 130px; }

.translate { position: absolute; right: 0; top: 831px; width: 82px; height: 72px; border-radius: 36px 0 0 36px; background: #373737; color: #e6dfe1; padding: 8px 0 0 10px; box-shadow: 0 6px 24px rgba(0,0,0,.25); }
.shade { position: absolute; left: 0; right: 0; bottom: 0; height: 90px; background: linear-gradient(transparent, rgba(0,0,0,.16)); }
.tip { position: absolute; left: 1564px; top: 1368px; width: 111px; height: 56px; border: 3px solid #000; border-radius: 10px; background: #40403f; box-shadow: inset 0 0 0 2px #666; color: #f4f4f4; text-align: center; font: 400 27px/48px "Noto Sans CJK SC", sans-serif; }
.tip svg { position: absolute; left: 36px; top: 50px; overflow: visible; }

/* dock */
.dock {
  margin: 6px 18px 0; height: 118px; border: 2px solid #4b5048; border-radius: 44px;
  background: linear-gradient(90deg, #22301e 0, #20281f 18%, #1d2724 28%, #2d3a20 40%, #2a2a1e 50%, #241e1a 58%, #2a2019 66%, #222a24 74%, #28291f 84%, #4a3420 89%, #1d2224 95%);
  display: grid; align-items: end; padding: 0 0 26px 14px;
  grid-template-columns: 96px 96px 96px 96px 96px 96px 96px 96px 96px 96px 96px 96px 95px 95px 97px 103px 115px 126px 128px 121px 107px 105px 34px 96px 96px 96px 104px 41px 92px 64px;
}
.app { position: relative; height: 72px; display: flex; align-items: flex-end; width: max-content; }
.app svg { width: 72px; height: 72px; }
.app svg.over { overflow: visible; }
.app svg.w74 { width: 75px; height: 75px; margin-bottom: 1px; }
.app svg.w80 { width: 81px; height: 81px; margin-bottom: 1px; }
.app svg.w88 { width: 88px; height: 88px; margin-bottom: 2px; }
.app svg.w92 { width: 93px; height: 92px; margin-bottom: 3px; }
.app svg.w96 { width: 96px; height: 96px; margin-bottom: 3px; }
.app svg.w98 { width: 98px; height: 98px; margin-bottom: 3px; }
.app svg.doc { width: 58px; height: 84px; margin-bottom: -4px; }
.app svg.trash { width: 64px; height: 79px; margin-bottom: -3px; }
.app.run::after { content: ""; position: absolute; left: 50%; bottom: -25px; width: 8px; height: 8px; margin-left: -4px; border-radius: 50%; background: #adb0a9; }
.app em { position: absolute; right: -13px; top: -8px; width: 34px; height: 34px; border-radius: 50%; background: #e0483a; color: #fff; font: 500 20px/34px "Inter", sans-serif; text-align: center; }
.dsep { width: 2px; height: 86px; background: #62665f; margin-bottom: -12px; }
```
